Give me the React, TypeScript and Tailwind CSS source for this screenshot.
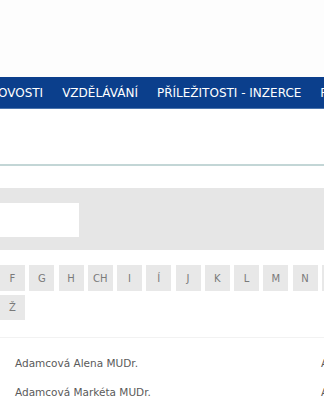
const navItems = ["NOVOSTI", "VZDĚLÁVÁNÍ", "PŘÍLEŽITOSTI - INZERCE", "PRO VEŘEJNOST"];
const letters = ["F", "G", "H", "CH", "I", "Í", "J", "K", "L", "M", "N", "O"];
const people = [
  { name: "Adamcová Alena MUDr.", city: "Argentinská" },
  { name: "Adamcová Markéta MUDr.", city: "Americká" },
];

export default function App() {
  return (
    <div
      className="w-[324px] h-[400px] overflow-hidden bg-white"
      style={{ fontFamily: '"DejaVu Sans", "Open Sans", sans-serif' }}
    >
      <div className="h-[77px] bg-[#fdfdfd]" />

      {/* main menu */}
      <nav className="h-[32px] bg-[#0b3f8c] border-b border-[#4a74ad] flex items-center whitespace-nowrap">
        <div className="flex items-center gap-[19px] ml-[-11px] text-[12px] text-white">
          {navItems.map((item) => (
            <span key={item}>{item}</span>
          ))}
        </div>
      </nav>

      <div className="h-[55px]" />
      <div className="h-[2px] bg-[#c3d6d6]" />
      <div className="h-[22px]" />

      {/* search */}
      <div className="h-[62px] bg-[#e6e6e6] pt-[15px]">
        <div className="w-[79px] h-[34px] bg-white" />
      </div>

      {/* alphabet */}
      <div className="pt-[15px] flex flex-col gap-[4px]">
        <div className="flex gap-[4.25px] whitespace-nowrap">
          {letters.map((l) => (
            <div
              key={l}
              className="w-[25px] h-[26px] shrink-0 bg-[#e8e8e8] flex items-center justify-center text-[10px] text-[#7a7a7a]"
            >
              {l}
            </div>
          ))}
        </div>
        <div className="flex">
          <div className="w-[25px] h-[25px] bg-[#e8e8e8] flex items-center justify-center text-[10px] text-[#7a7a7a]">
            Ž
          </div>
        </div>
      </div>

      <div className="h-[17px]" />
      <div className="h-px bg-[#f2f2f2]" />

      {/* doctors */}
      <div className="pt-[18px] flex flex-col gap-[13px]">
        {people.map((p) => (
          <div key={p.name} className="flex h-[16px] items-center text-[10.5px] text-[#5a5a5a] whitespace-nowrap">
            <span className="w-[321px] shrink-0 pl-[15px]">{p.name}</span>
            <span>{p.city}</span>
          </div>
        ))}
      </div>
    </div>
  );
}
